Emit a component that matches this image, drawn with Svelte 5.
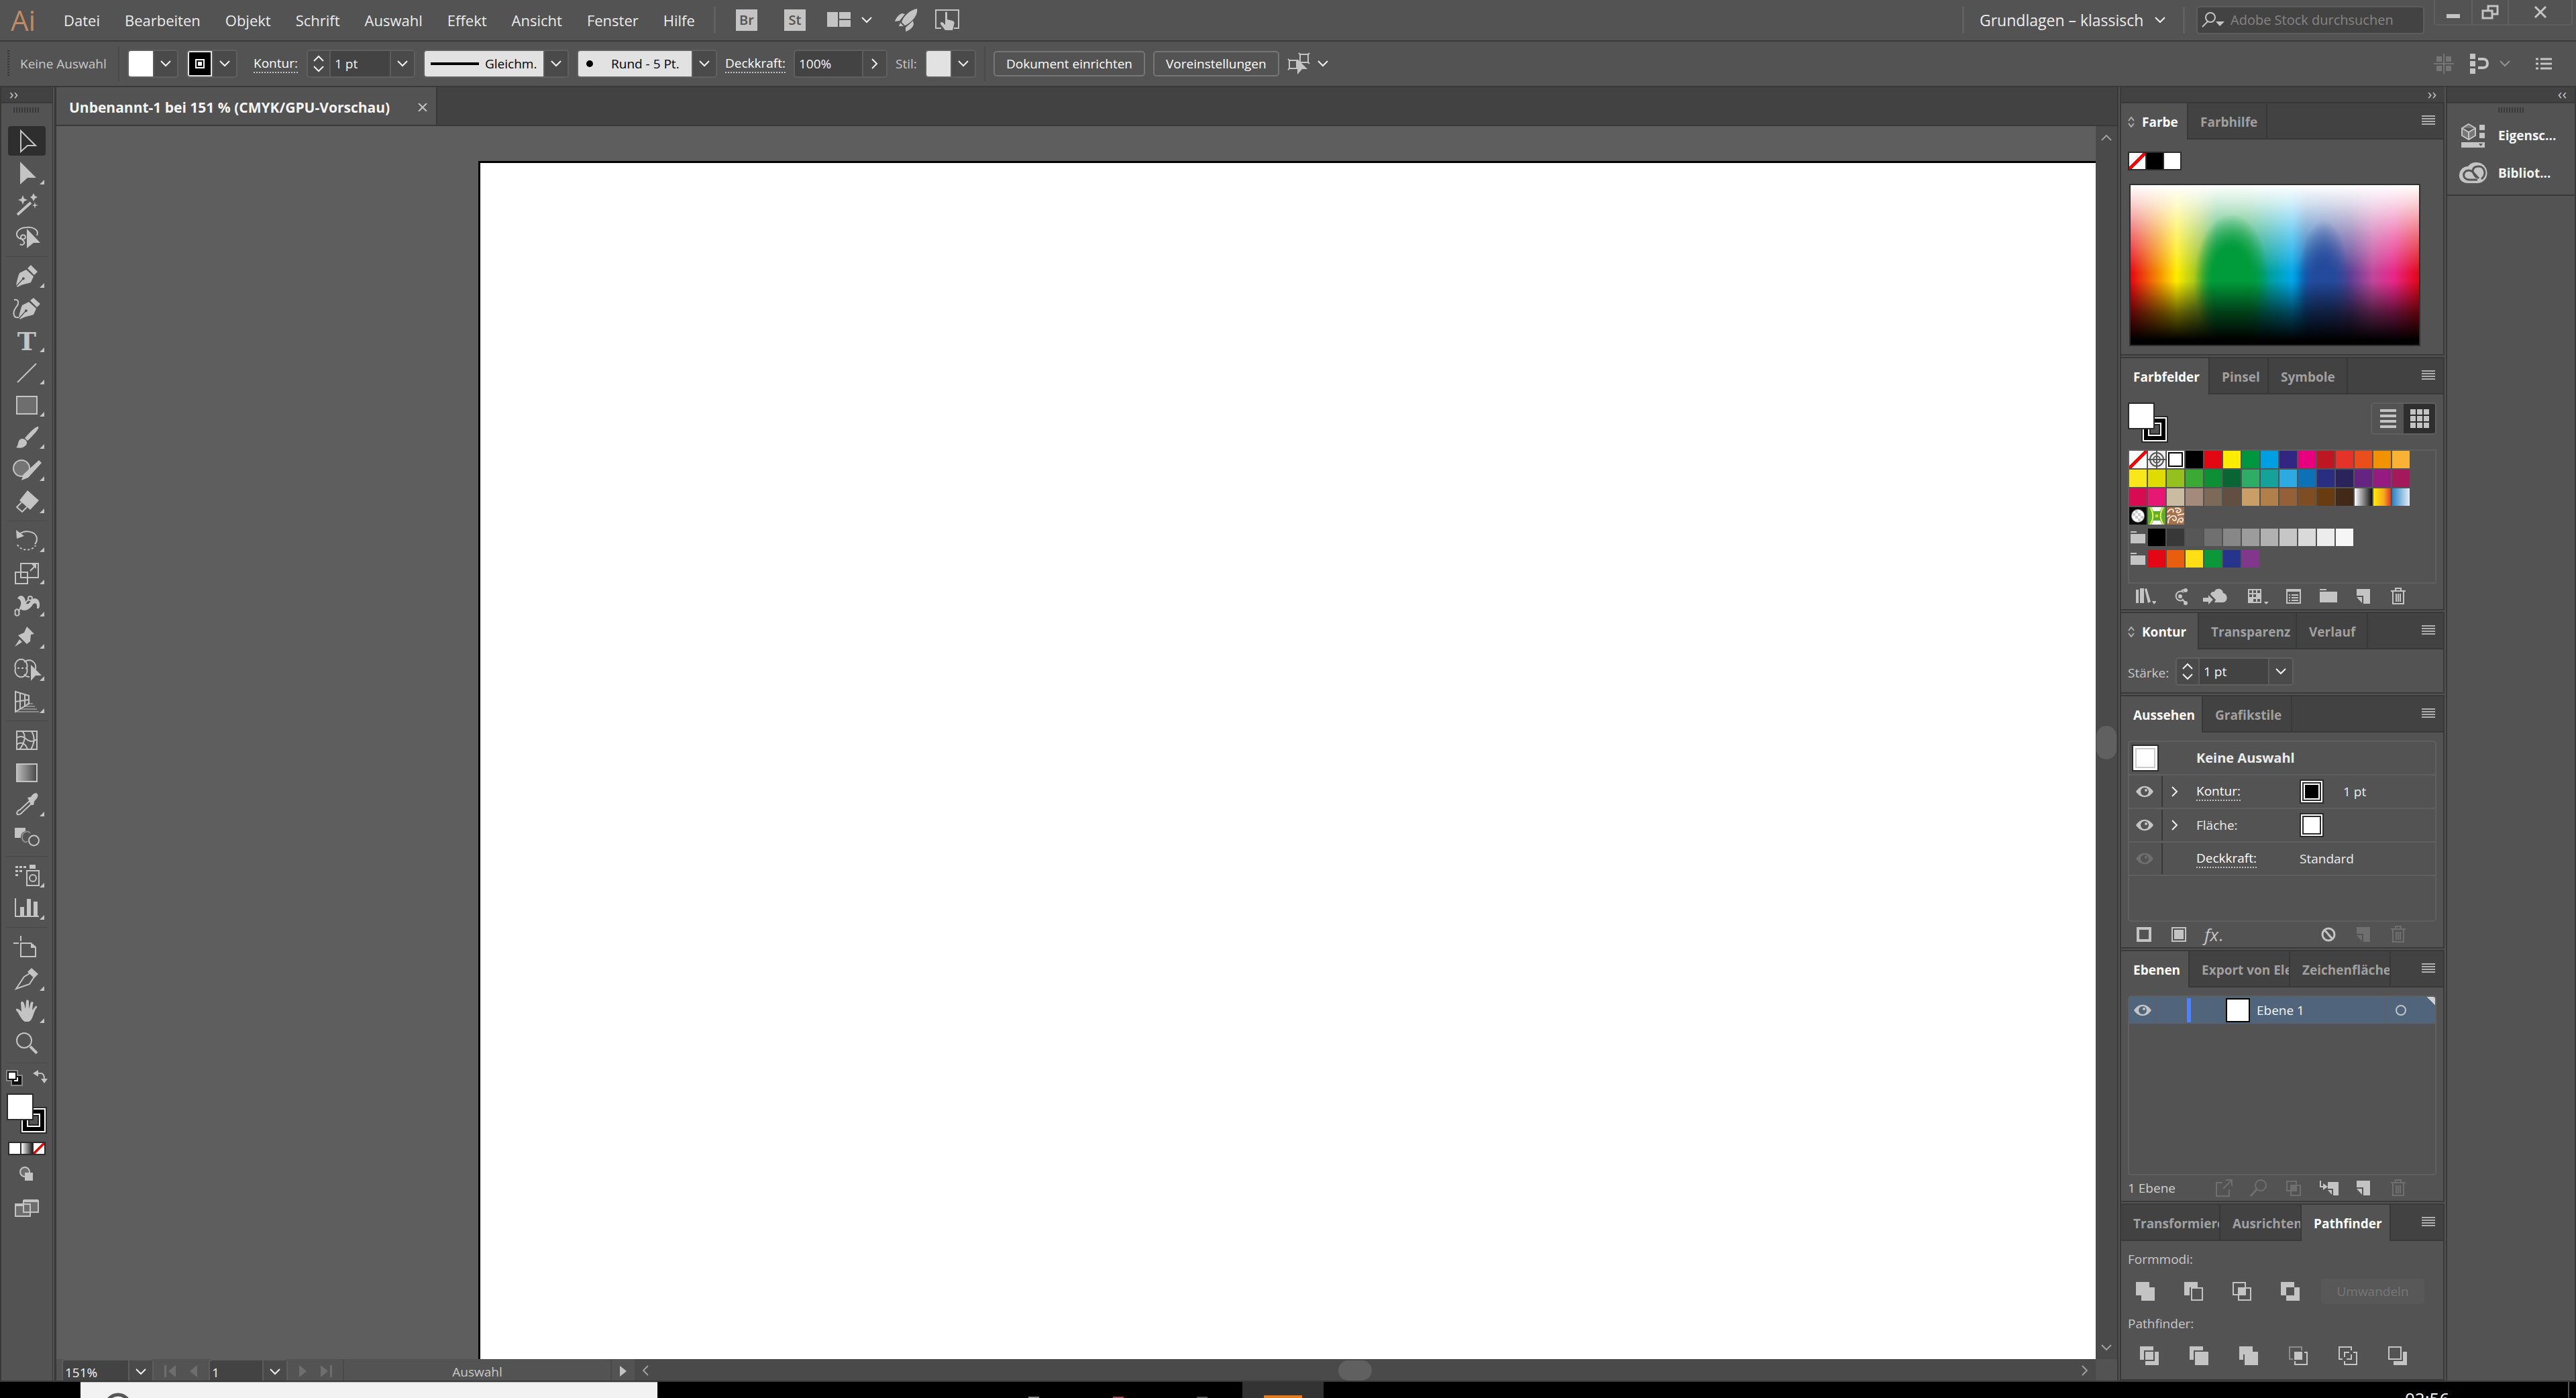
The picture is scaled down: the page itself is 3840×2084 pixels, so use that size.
<script>
  const menus = ['Datei', 'Bearbeiten', 'Objekt', 'Schrift', 'Auswahl', 'Effekt', 'Ansicht', 'Fenster', 'Hilfe'];

  // s = stroked path, f = filled path, dim = second stroked path in darker grey
  const arrow = 'M19 7L41 29H29L19 38Z';
  const toolGroups = [
    [
      { n: 'Auswahl', s: arrow, on: true },
      { n: 'Direktauswahl', f: 'M18 5L42 29H29L18 39Z', fly: true },
      { n: 'Zauberstab', thick: 'M14 36L34 18', f: 'M22 7L24 12L29 14L24 16L22 21L20 16L15 14L20 12ZM38 4L40 8L44 10L40 12L38 16L36 12L33 10L36 8ZM40 17L41 21L45 22L41 23L40 27L39 23L36 22L39 21Z' },
      { n: 'Lasso', s: 'M43 19C47 10 36 6 28 7C19 7 12 12 13 18C14 24 24 27 26 22C26 17 19 17 19 22C20 26 26 27 24 31C22 34 19 33 18 32', f: 'M28 9L48 30H38L28 38Z' }
    ],
    [
      { n: 'Zeichenstift', f: 'M34 5L44 15L39 20L29 10ZM27 12L38 22L34 31C28 33 20 34 14 38L13 37L22 27A2 2 0 1 0 21 26L12 36C13 28 15 22 17 17Z', fly: true },
      { n: 'Kurvenzeichner', s: 'M9 9C16 7 17 14 12 20C6 28 8 37 16 35', f: 'M38 6L48 15L43 20L33 10ZM31 12L42 22L38 31C32 33 24 34 18 38L17 37L26 27A2 2 0 1 0 25 26L16 36C17 28 19 22 21 17Z' },
      { n: 'Text', t: true, fly: true },
      { n: 'Liniensegment', s: 'M14 36L42 8', fly: true },
      { n: 'Rechteck', box: true, fly: true },
      { n: 'Pinsel', f: 'M45 6C48 8 36 21 29 27L25 23C31 16 41 5 45 6ZM12 37C16 34 14 28 18 25C22 22 29 26 28 31C26 37 19 39 12 37Z', fly: true },
      { n: 'Shaper', ell: true, f: 'M46 8L50 12L30 34L20 38L23 29Z', fly: true },
      { n: 'Radiergummi', f: 'M29 5L46 20L33 34L17 20Z', s: 'M20 23L13 30L21 37L28 30', fly: true }
    ],
    [
      { n: 'Drehen', s: 'M15 14C24 5 42 7 43 19C43 22 42 25 40 27', f: 'M12 6L13 19L24 15Z', dots: 'M14 28C19 38 36 38 41 29', fly: true },
      { n: 'Skalieren', s: 'M19 8H45V29H19ZM11 21H29V38H11ZM33 19L41 11', f: 'M35 9H42V16Z', fly: true },
      { n: 'Breite', f: 'M14 12C18 4 27 9 26 19C32 24 32 14 39 12C46 11 49 20 46 27H43C44 20 41 17 37 21C32 30 22 33 17 26C20 22 21 14 14 12Z', s: 'M15 31L31 13M11 33A3 3 0 1 0 16 33A3 3 0 1 0 11 33M30 12A3 3 0 1 0 36 12A3 3 0 1 0 30 12', fly: true },
      { n: 'Verschieben', f: 'M28 6L39 17L34 18L33 28L28 32L15 19L24 15ZM10 36L17 25L21 29Z', fly: true },
      { n: 'Formerstellung', s: 'M24 11C33 4 43 11 41 22M24 29C26 32 29 33 32 33M28 20A9 10 0 1 0 11 20A9 10 0 1 0 28 20', dots: 'M14 20H32', f: 'M34 15L50 31H41L34 39Z', fly: true },
      { n: 'Perspektivenraster', s: 'M11 7L31 13V25L11 37ZM18 9V33M25 11V29M11 22L31 19', dim: 'M28 25H37M24 29H40M19 33H43M11 37H46', fly: true }
    ],
    [
      { n: 'Gitter', s: 'M13 8H43V35H13ZM13 18C22 12 27 21 31 22C36 25 40 22 43 20M13 28C20 22 27 28 29 35M21 8C28 14 24 27 17 35M35 8C40 16 40 25 34 35' },
      { n: 'Verlauf', grad: true },
      { n: 'Pipette', s: 'M33 15L18 29C14 30 12 34 14 36C16 37 20 35 21 33L36 19', f: 'M29 11L34 10C37 4 43 3 44 6C46 10 41 14 39 17L38 22L34 22Z', fly: true },
      { n: 'Angleichen', f: 'M10 8H26V13C21 14 19 18 19 23H10Z', dim: 'M33 16C30 11 21 14 21 22C21 28 26 31 29 28', s: 'M46 27A7 7 0 1 0 31 27A7 7 0 1 0 46 27' }
    ],
    [
      { n: 'Symbol aufsprühen', s: 'M28 14H46V36H28ZM42 25A5 5 0 1 0 32 25A5 5 0 1 0 42 25', f: 'M32 5H41V11H32ZM11 7h4v3h-4ZM17 7h4v3h-4ZM23 7h4v3h-4ZM11 13h4v3h-4ZM17 13h4v3h-4ZM11 19h4v3h-4Z', fly: true },
      { n: 'Diagramm', s: 'M11 7V34H46', f: 'M18 20H24V35H18ZM28 8H34V35H28ZM38 12H44V35H38Z', fly: true }
    ],
    [
      { n: 'Zeichenfläche', s: 'M8 16H16M19 5V13M19 16H34L41 22V36H19Z', f: 'M34 16V23H42Z' },
      { n: 'Slice', s: 'M34 12L24 18L12 36L32 29L39 18', f: 'M35 5L45 14L39 20L29 11Z', fly: true },
      { n: 'Hand', f: 'M12 18C15 17 18 20 20 22L19 9C20 5 23 7 24 10L26 18L27 6C28 4 31 4 31 7V18L34 8C36 6 39 8 37 11L36 20L40 15C42 12 45 15 42 17C38 22 37 35 31 37H25C19 34 17 25 12 20Z', fly: true },
      { n: 'Zoom', s: 'M35 17A11 11 0 1 0 13 17A11 11 0 1 0 35 17', thick: 'M33 26L43 36' }
    ]
  ];

  const swatches = [
    ['no', 'reg', 'sel', '#000000', '#e30613', '#ffed00', '#009640', '#009fe3', '#312783', '#e6007e', '#be1622', '#e6332a', '#e94e1b', '#f39200', '#f9b233'],
    ['#f9e71c', '#dedc00', '#95c11f', '#3aaa35', '#0d9035', '#086634', '#2fac66', '#15a29a', '#2eaae2', '#0e71b8', '#2a2e83', '#2a235c', '#652482', '#951b81', '#a3195b'],
    ['#d60b51', '#e71873', '#cbbba0', '#a48a7b', '#7b6a58', '#634e42', '#ca9e67', '#b07f4a', '#936037', '#7d4e24', '#693b11', '#432918', 'g1', 'g2', 'g3'],
    ['pat1', 'pat2', 'pat3'],
    ['folder', '#000000', '#383838', '#575757', '#707070', '#878787', '#9c9c9c', '#b1b1b1', '#c6c6c6', '#dadada', '#ececec', '#f6f6f6'],
    ['folder', '#e30613', '#e95d0f', '#ffde16', '#0b983a', '#27348b', '#82368c']
  ];

  const modes = [
    { n: 'Vereinen', f: 'M0 0H20V8H28V28H8V20H0Z' },
    { n: 'Vorderes Objekt abziehen', f: 'M0 0H20V8H8V20H0Z', s: 'M11 9H27V27H11Z' },
    { n: 'Schnittmenge bilden', f: 'M8 8H20V20H8Z', s: 'M1 1H19V19H1ZM9 9H27V27H9Z' },
    { n: 'Schnittmenge entfernen', f: 'M0 0H20V8H8V20H0ZM20 8H28V28H8V20H20Z' }
  ];
  const finders = [
    { n: 'Fläche aufteilen', f: 'M0 0H20V6H6V20H0ZM8 8H20V20H8ZM22 8H28V28H8V22H22Z' },
    { n: 'Überlappungsbereich entfernen', f: 'M0 0H20V6H6V20H0ZM8 8H28V28H8Z' },
    { n: 'Verdeckte Fläche entfernen', f: 'M0 0H20V8H28V28H8V12H6V20H0Z' },
    { n: 'Schnittmengenfläche', f: 'M8 8H20V20H8Z', dim: 'M6 19H1V1H19V6', s: 'M23 9H27V27H9V22' },
    { n: 'Kontur aufteilen', s: 'M6 19H1V1H19V6M9 16V9H16M19 12V19H12M22 9H27V27H9V22' },
    { n: 'Hinteres Objekt abziehen', s: 'M1 1H19V19H1Z', f: 'M22 8H28V28H8V22H22Z' }
  ];
  const appearance = [
    { n: 'Kontur:', link: true, sw: 'dark', v: '1 pt' },
    { n: 'Fläche:', sw: 'light', v: '' }
  ];
</script>

{#snippet chev(dir)}
  <svg class="chev {dir}" viewBox="0 0 16 10" aria-hidden="true"><path d="M1 1L8 8L15 1" /></svg>
{/snippet}

{#snippet tabs(list, arrows)}
  <div class="tabs" role="tablist">
    {#each list as t}
      <button type="button" class="tab" class:on={t.on} role="tab" aria-selected={!!t.on} style:width="{t.w}px">
        {#if arrows && t.on}
          <svg class="updown" viewBox="0 0 10 16" aria-hidden="true"><path d="M1 6L5 1L9 6M1 10L5 15L9 10" /></svg>
        {/if}
        {t.n}
      </button>
    {/each}
    <button type="button" class="burger" aria-label="Bedienfeldmenü"><i></i><i></i><i></i><i></i></button>
  </div>
{/snippet}

{#snippet eye(off)}
  <svg class="eye" class:off viewBox="0 0 26 18" aria-hidden="true">
    <path d="M0 9C7 -2 19 -2 26 9C19 20 7 20 0 9Z" /><circle cx="13" cy="9" r="6" class="iris" /><circle cx="15" cy="7" r="2" />
  </svg>
{/snippet}

{#snippet newIcon(off)}
  <button type="button" class="ib" class:off aria-label="Neu">
    <svg viewBox="0 0 30 26"><path class="f" d="M5 2H25V24H15V12H5ZM5 14H13V23Z" /></svg>
  </button>
{/snippet}

{#snippet trash(off)}
  <button type="button" class="ib" class:off aria-label="Löschen">
    <svg viewBox="0 0 30 26"><path class="s" d="M4 5H26M11 4V1H19V4M7 6V24H23V6M12 9V21M15 9V21M18 9V21" /></svg>
  </button>
{/snippet}

{#snippet fillStroke()}
  <span class="fs"><i class="st"><i></i></i><i class="fi"></i></span>
{/snippet}

<div class="app">
  <header class="top">
    <span class="logo">Ai</span>
    <nav class="menu">
      {#each menus as m}<button type="button">{m}</button>{/each}
    </nav>
    <i class="vbar"></i>
    <div class="apps">
      <button type="button" class="sq">Br</button>
      <button type="button" class="sq">St</button>
      <button type="button" class="arr" aria-label="Dokumente anordnen">
        <svg width="36" height="24" viewBox="0 0 36 24"><path class="f" d="M0 0H16V22H0ZM18 0H35V10H18ZM18 12H35V22H18Z" /></svg>
        {@render chev('down')}
      </button>
      <button type="button" aria-label="GPU-Leistung">
        <svg width="36" height="36" viewBox="0 0 36 36"><path class="f" d="M35 1C37 11 26 22 17 26L12 21C15 12 24 3 35 1ZM13 8L17 9L9 19L2 20C4 14 8 9 13 8ZM29 19L30 24C29 29 24 33 18 35V29ZM10 22L15 27L8 27Z" /></svg>
      </button>
      <button type="button" aria-label="Touch-Arbeitsbereich">
        <svg width="36" height="32" viewBox="0 0 36 32"><path class="s" d="M9 28H1V1H35V28H28" /><path class="f" d="M15 5C15 3 18 3 18 5V15L26 17C29 18 29 20 28 23L26 31H15L8 22C7 19 10 18 12 20L15 23Z" /></svg>
      </button>
    </div>
    <div class="topright">
      <i class="vbar"></i>
      <label class="space">
        <select aria-label="Arbeitsbereich"><option>Grundlagen – klassisch</option></select>
        {@render chev('down')}
      </label>
      <i class="vbar"></i>
      <label class="search">
        <svg width="34" height="24" viewBox="0 0 34 24"><circle cx="13" cy="8" r="7" class="s" /><path class="s" d="M9 14L1 22" /><path class="f" d="M21 14H34L27 21Z" /></svg>
        <input type="search" placeholder="Adobe Stock durchsuchen" aria-label="Adobe Stock durchsuchen" />
      </label>
      <div class="win">
        <button type="button" aria-label="Minimieren"><svg width="22" height="20" viewBox="0 0 22 20"><path class="f" d="M1 13H21V19H1Z" /></svg></button>
        <button type="button" aria-label="Wiederherstellen"><svg width="26" height="22" viewBox="0 0 26 22"><path class="s w3" d="M10 8V2H24V14H17M2 9H16V20H2Z" /></svg></button>
        <button type="button" class="x" aria-label="Schließen"><svg width="20" height="18" viewBox="0 0 20 18"><path class="s w3" d="M2 1L18 17M18 1L2 17" /></svg></button>
      </div>
    </div>
  </header>

  <div class="control">
    <i class="grip v"></i>
    <span class="dim selinfo">Keine Auswahl</span>
    <i class="sep"></i>
    <div class="field sw"><button type="button" class="chip white" aria-label="Fläche"></button><button type="button" class="dd" aria-label="Flächenfarbe wählen">{@render chev('down')}</button></div>
    <div class="field sw"><button type="button" class="chip blk" aria-label="Kontur"><i></i></button><button type="button" class="dd" aria-label="Konturfarbe wählen">{@render chev('down')}</button></div>
    <label class="ul kon" for="weight"><span>Kontur:</span></label>
    <div class="field wt">
      <span class="step"><button type="button" aria-label="Mehr">{@render chev('up')}</button><button type="button" aria-label="Weniger">{@render chev('down')}</button></span>
      <input id="weight" value="1 pt" />
      <button type="button" class="dd" aria-label="Konturstärke wählen">{@render chev('down')}</button>
    </div>
    <label class="field lite prof">
      <span class="face"><svg width="72" height="4" viewBox="0 0 72 4"><path d="M0 0H72V4H0Z" /></svg><select aria-label="Breitenprofil"><option>Gleichm.</option></select></span>
      <span class="dd">{@render chev('down')}</span>
    </label>
    <label class="field lite rund">
      <span class="face"><svg width="10" height="10" viewBox="0 0 10 10"><circle cx="5" cy="5" r="5" /></svg><select aria-label="Pinseldefinition"><option>Rund - 5 Pt.</option></select></span>
      <span class="dd">{@render chev('down')}</span>
    </label>
    <label class="ul deck" for="opacity"><span>Deckkraft:</span></label>
    <div class="field op"><input id="opacity" value="100%" /><button type="button" class="dd" aria-label="Deckkraft wählen">{@render chev('right')}</button></div>
    <span class="dim stil">Stil:</span>
    <div class="field sw"><button type="button" class="chip grey" aria-label="Grafikstil"></button><button type="button" class="dd" aria-label="Grafikstil wählen">{@render chev('down')}</button></div>
    <i class="sep"></i>
    <button type="button" class="btn">Dokument einrichten</button>
    <button type="button" class="btn">Voreinstellungen</button>
    <button type="button" class="match" aria-label="Ähnliche Objekte auswählen">
      <svg width="34" height="34" viewBox="0 0 34 34"><path class="s" d="M19 3H31V15H19ZM3 12H14V24H3ZM17 1L19 3M31 3L33 1M31 15L33 17M1 10L3 12M3 24L1 26" /><path class="f" d="M15 10L30 25H22L15 33Z" /></svg>
      {@render chev('down')}
    </button>
    <div class="ctlright">
      <svg class="faint" width="30" height="30" viewBox="0 0 30 30"><path class="f" d="M4 4H12V12H4ZM18 4H26V12H18ZM4 18H12V26H4ZM18 18H26V26H18Z" /><path class="s" d="M15 0V30M0 15H30" /></svg>
      <span class="magnet">
        <svg width="30" height="30" viewBox="0 0 30 30"><path class="f" d="M0 0H8V8H0ZM0 11H8V19H0ZM0 22H8V30H0Z" /><path class="s w4" d="M12 8H20C28 8 28 21 20 21H12" /></svg>
        {@render chev('down')}
      </span>
      <svg width="24" height="18" viewBox="0 0 24 18"><path class="s w3" d="M0 2H4M7 2H24M0 9H4M7 9H24M0 16H4M7 16H24" /></svg>
    </div>
  </div>

  <main class="main">
    <aside class="tools">
      <div class="strip left">››</div>
      <i class="grip h"></i>
      {#each toolGroups as g}
        <div class="group">
          {#each g as t}
            <button type="button" class="tool" class:on={t.on} aria-label={t.n}>
              <svg viewBox="0 0 56 44">
                {#if t.dim}<path class="s g" d={t.dim} />{/if}
                {#if t.box}<rect x="13" y="9" width="30" height="26" fill="#6e6e6e" class="b" />{/if}
                {#if t.grad}
                  <defs><linearGradient id="tg"><stop offset="0" stop-color="#bbb" /><stop offset="1" stop-color="#484848" /></linearGradient></defs>
                  <rect x="13" y="9" width="30" height="26" fill="url(#tg)" class="b" />
                {/if}
                {#if t.ell}<circle cx="20" cy="20" r="12" fill="#757575" class="b" />{/if}
                {#if t.s}<path class="s" d={t.s} />{/if}
                {#if t.thick}<path class="s w4" d={t.thick} />{/if}
                {#if t.dots}<path class="s dots" d={t.dots} />{/if}
                {#if t.f}<path class="f" d={t.f} />{/if}
                {#if t.t}<text x="28" y="36" text-anchor="middle">T</text>{/if}
                {#if t.fly}<path class="f" d="M47 39H54V32Z" />{/if}
              </svg>
            </button>
          {/each}
        </div>
      {/each}
      <div class="mini">
        <svg width="26" height="26" viewBox="0 0 26 26"><path fill="#888" d="M0 1H18V8H25V25H7V18H0Z" /><path fill="#111" d="M2 3H16V10H23V23H9V16H2Z" /><path fill="#fff" d="M4 5H14V14H4ZM16 12H18V18H12V16H16Z" /></svg>
        <svg width="22" height="22" viewBox="0 0 22 22"><path class="s" d="M5 6H12C16 6 17 9 17 15" /><path class="f" d="M0 6L8 1V11ZM12 14H22L17 21Z" /></svg>
      </div>
      {@render fillStroke()}
      <div class="trio"><i class="w"></i><i class="gr"></i><i class="no"></i></div>
      <svg class="mode" width="22" height="22" viewBox="0 0 22 22"><circle cx="8" cy="8" r="7" fill="#6e6e6e" class="b" /><path class="f" d="M8 9H20V21H8Z" /></svg>
      <svg class="mode" width="36" height="26" viewBox="0 0 36 26"><path fill="#6e6e6e" class="b" d="M1 7H23V25H1ZM13 2H35V19H13Z" /><path class="s w4" d="M1 8H12M13 2H35" /></svg>
    </aside>

    <section class="doc">
      <div class="doctabs">
        <div class="doctab"><span>Unbenannt-1 bei 151 % (CMYK/GPU-Vorschau)</span>
          <button type="button" aria-label="Dokument schließen"><svg width="14" height="12" viewBox="0 0 14 12"><path class="s" d="M1 0L13 12M13 0L1 12" /></svg></button></div>
      </div>
      <div class="view">
        <div class="canvas"><div class="artboard"></div></div>
        <div class="vscroll">{@render chev('up')}<i class="thumb"></i>{@render chev('down')}</div>
      </div>
      <footer class="status">
        <div class="sf z"><input aria-label="Zoomstufe" value="151%" /><button type="button" aria-label="Zoomstufe wählen">{@render chev('down')}</button></div>
        <div class="nav">
          <svg width="18" height="18" viewBox="0 0 18 18"><path d="M0 0H3V18H0ZM17 0V18L6 9Z" /></svg>
          <svg width="12" height="18" viewBox="0 0 12 18"><path d="M11 0V18L0 9Z" /></svg>
        </div>
        <div class="sf a"><input aria-label="Zeichenfläche" value="1" /><button type="button" aria-label="Zeichenfläche wählen">{@render chev('down')}</button></div>
        <div class="nav">
          <svg width="12" height="18" viewBox="0 0 12 18"><path d="M1 0V18L12 9Z" /></svg>
          <svg width="18" height="18" viewBox="0 0 18 18"><path d="M15 0H18V18H15ZM1 0V18L12 9Z" /></svg>
        </div>
        <span class="cur">Auswahl</span>
        <button type="button" class="play" aria-label="Statusanzeige"><svg width="10" height="16" viewBox="0 0 10 16"><path class="f" d="M0 0L10 8L0 16Z" /></svg></button>
        <div class="hscroll">{@render chev('left')}<i class="thumb"></i>{@render chev('right')}</div>
        <i class="corner"></i>
      </footer>
    </section>

    <aside class="panels">
      <div class="strip right">››</div>

      <section class="panel farbe">
        {@render tabs([{ n: 'Farbe', w: 100, on: true }, { n: 'Farbhilfe', w: 118 }], true)}
        <div class="body">
          <div class="trio"><i class="no"></i><i class="k"></i><i class="w"></i></div>
          <div class="spectrum"></div>
        </div>
      </section>

      <section class="panel felder">
        {@render tabs([{ n: 'Farbfelder', w: 132, on: true }, { n: 'Pinsel', w: 88 }, { n: 'Symbole', w: 118 }], false)}
        <div class="body">
          <div class="fhead">
            {@render fillStroke()}
            <div class="toggle">
              <button type="button" aria-label="Liste"><svg width="24" height="28" viewBox="0 0 24 28"><path class="s w4" d="M0 2H24M0 10H24M0 18H24M0 26H24" /></svg></button>
              <button type="button" class="on" aria-label="Miniaturen"><svg width="28" height="28" viewBox="0 0 28 28"><path class="f" d="M0 0h8v8h-8zM10 0h8v8h-8zM20 0h8v8h-8zM0 10h8v8h-8zM10 10h8v8h-8zM20 10h8v8h-8zM0 20h8v8h-8zM10 20h8v8h-8zM20 20h8v8h-8z" /></svg></button>
            </div>
          </div>
          <div class="swbox">
            {#each swatches as row}
              <div class="swrow" class:fold={row[0] === 'folder'}>
                {#each row as c}
                  {#if c[0] === '#'}
                    <i style:background={c}></i>
                  {:else if c === 'folder'}
                    <svg viewBox="0 0 26 26"><path class="f" d="M2 4H11V6H2ZM2 8H24V22H2Z" /></svg>
                  {:else if c === 'reg'}
                    <svg viewBox="0 0 26 26"><path fill="#eee" d="M0 0H26V26H0Z" /><path stroke="#555" stroke-width="2" fill="none" d="M13 0V26M0 13H26M23 13A10 10 0 1 0 3 13A10 10 0 1 0 23 13M18 13A5 5 0 1 0 8 13A5 5 0 1 0 18 13" /></svg>
                  {:else if c === 'pat1'}
                    <svg viewBox="0 0 26 26"><path d="M0 0H26V26H0Z" fill="#0a0a0a" /><circle cx="13" cy="13" r="10" fill="#999" /><circle cx="13" cy="13" r="9" fill="#fff" /><path fill="#ccc" d="M9 5h4v4h-4zM5 9h4v4h-4zM13 9h4v4h-4zM9 13h4v4h-4zM17 13h4v4h-4zM13 17h4v4h-4z" /></svg>
                  {:else if c === 'pat2'}
                    <svg viewBox="0 0 26 26"><path d="M0 0H26V26H0Z" fill="#5cb02c" /><path fill="#fff" d="M5 0H21L18 6H8ZM5 26H21L18 20H8Z" /><path fill="none" stroke="#f3ec6a" stroke-width="2" d="M3 0C9 9 9 17 3 26M23 0C17 9 17 17 23 26" /><path fill="#d9dc2e" d="M11 11h4v4h-4z" /></svg>
                  {:else if c === 'pat3'}
                    <svg viewBox="0 0 26 26"><path d="M0 0H26V26H0Z" fill="#a5714a" /><path fill="none" stroke="#f1e2cf" stroke-width="2" d="M1 8C6 0 12 3 9 8M12 2C20 0 24 6 18 8C14 9 13 5 17 5M2 24C2 12 14 10 14 17C14 22 8 20 9 17M16 24C17 15 25 14 24 20C22 24 19 22 20 20M16 12L26 10M0 14L5 12" /></svg>
                  {:else}
                    <i class={c}></i>
                  {/if}
                {/each}
              </div>
            {/each}
          </div>
          <div class="foot">
            <button type="button" class="ib l1" aria-label="Bibliotheken"><svg viewBox="0 0 30 26"><path class="f" d="M0 3H4V23H0ZM6 1H12V23H6ZM13 2L16 1L22 21L18 23ZM24 20H31L27 25Z" /></svg></button>
            <button type="button" class="ib l2" aria-label="Farbthemen"><svg viewBox="0 0 30 26"><path class="s" d="M19 7A7 7 0 1 0 19 18M16 4L22 3M17 17L22 23" /><circle class="f" cx="14" cy="13" r="3" /><circle class="f" cx="22" cy="4" r="3" /><circle class="f" cx="22" cy="23" r="3" /></svg></button>
            <button type="button" class="ib l3" aria-label="Zur Bibliothek hinzufügen"><svg viewBox="0 0 36 26"><path class="f" d="M0 15H8V11L15 18L8 25V21H0ZM17 22L19 18L11 10C12 6 15 6 17 6C19 0 29 0 30 8C37 9 38 21 30 22Z" /></svg></button>
            <button type="button" class="ib l4" aria-label="Farbfeldtypen"><svg viewBox="0 0 32 26"><path class="f" d="M1 2H21V23H1ZM25 21H32L28 25Z" /><path fill="#555" d="M3 4h4v4h-4zM9 4h4v4h-4zM15 4h4v4h-4zM3 10h4v4h-4zM9 10h4v4h-4zM9 17h4v4h-4zM15 17h4v4h-4z" /></svg></button>
            <button type="button" class="ib l5" aria-label="Farbfeldoptionen"><svg viewBox="0 0 30 26"><path class="s" d="M5 3H25V23H5ZM5 5H25M8 11H10M12 11H22M8 15H10M12 15H22M8 19H10M12 19H22" /></svg></button>
            <button type="button" class="ib l6" aria-label="Neue Farbgruppe"><svg viewBox="0 0 30 26"><path class="f" d="M2 2H12V4H2ZM2 6H28V22H2Z" /></svg></button>
            {@render newIcon(false)}
            {@render trash(false)}
          </div>
        </div>
      </section>

      <section class="panel kontur">
        {@render tabs([{ n: 'Kontur', w: 116, on: true }, { n: 'Transparenz', w: 146 }, { n: 'Verlauf', w: 106 }], true)}
        <div class="body">
          <label class="dim" for="strength">Stärke:</label>
          <div class="field stk">
            <span class="step"><button type="button" aria-label="Mehr">{@render chev('up')}</button><button type="button" aria-label="Weniger">{@render chev('down')}</button></span>
            <input id="strength" value="1 pt" />
            <button type="button" class="dd" aria-label="Stärke wählen">{@render chev('down')}</button>
          </div>
        </div>
      </section>

      <section class="panel aussehen">
        {@render tabs([{ n: 'Aussehen', w: 122, on: true }, { n: 'Grafikstile', w: 133 }], false)}
        <div class="body">
          <div class="list">
            <div class="arow head"><i class="thumbn"></i><b>Keine Auswahl</b></div>
            {#each appearance as a}
              <div class="arow">
                <span class="ec">{@render eye(false)}</span>
                <span class="cc">{@render chev('right')}</span>
                <span class="an" class:ul={a.link}><span>{a.n}</span></span>
                <i class="asw {a.sw}"><i></i></i>
                <span>{a.v}</span>
              </div>
            {/each}
            <div class="arow">
              <span class="ec">{@render eye(true)}</span><span class="cc"></span>
              <span class="an ul"><span>Deckkraft:</span></span><span>Standard</span>
            </div>
          </div>
          <div class="foot">
            <button type="button" class="ib" aria-label="Neue Kontur"><svg viewBox="0 0 30 26"><path class="s w4" d="M6 4H24V22H6Z" /></svg></button>
            <button type="button" class="ib a2" aria-label="Neue Fläche"><svg viewBox="0 0 30 26"><path class="s" d="M5 3H25V23H5Z" /><path class="f" d="M8 6H22V20H8Z" /></svg></button>
            <button type="button" class="ib fx" aria-label="Effekt hinzufügen"><em>fx</em>.</button>
            <button type="button" class="ib a4" aria-label="Aussehen löschen"><svg viewBox="0 0 30 26"><circle class="s w3" cx="15" cy="13" r="9" /><path class="s w3" d="M9 6L21 20" /></svg></button>
            {@render newIcon(true)}
            {@render trash(true)}
          </div>
        </div>
      </section>

      <section class="panel ebenen">
        {@render tabs([{ n: 'Ebenen', w: 102, on: true }, { n: 'Export von Ele', w: 150 }, { n: 'Zeichenfläche', w: 150 }], false)}
        <div class="body">
          <div class="list">
            <div class="layer">
              <span class="le">{@render eye(false)}</span><span class="ll"></span><i class="bar"></i>
              <i class="lt"></i><span class="ln">Ebene 1</span>
              <span class="lo"><i></i></span>
            </div>
          </div>
          <div class="foot">
            <span class="count">1 Ebene</span>
            <button type="button" class="ib off" aria-label="Exportieren"><svg viewBox="0 0 30 26"><path class="s" d="M13 5H4V25H23V15M14 14L26 2M18 1H27V10" /></svg></button>
            <button type="button" class="ib off b2" aria-label="Objekt suchen"><svg viewBox="0 0 30 26"><circle class="s" cx="18" cy="9" r="8" /><path class="s w3" d="M12 15L3 25" /></svg></button>
            <button type="button" class="ib off b3" aria-label="Schnittmaske"><svg viewBox="0 0 30 26"><path class="s" d="M5 3H19V17H5ZM11 9H25V24H11Z" /><path class="f" d="M10 8H20V18H10Z" /></svg></button>
            <button type="button" class="ib b4" aria-label="Neue Unterebene"><svg viewBox="0 0 30 26"><path class="s" d="M3 2V11H8" /><path class="f" d="M7 6L14 11L7 16ZM14 4H30V24H22V14H14ZM14 16H20V23Z" /></svg></button>
            {@render newIcon(false)}
            {@render trash(true)}
          </div>
        </div>
      </section>

      <section class="panel path">
        {@render tabs([{ n: 'Transformiere', w: 148 }, { n: 'Ausrichten', w: 121 }, { n: 'Pathfinder', w: 133, on: true }], false)}
        <div class="body">
          <span class="dim">Formmodi:</span>
          <div class="prow modes">
            {#each modes as m}
              <button type="button" aria-label={m.n}><svg width="28" height="28" viewBox="0 0 28 28">{#if m.s}<path class="s" d={m.s} />{/if}<path class="f" d={m.f} /></svg></button>
            {/each}
            <button type="button" class="conv" disabled>Umwandeln</button>
          </div>
          <span class="dim">Pathfinder:</span>
          <div class="prow finders">
            {#each finders as m}
              <button type="button" aria-label={m.n}><svg width="28" height="28" viewBox="0 0 28 28">{#if m.dim}<path class="s g" d={m.dim} />{/if}{#if m.s}<path class="s" d={m.s} />{/if}{#if m.f}<path class="f" d={m.f} />{/if}</svg></button>
            {/each}
          </div>
        </div>
      </section>
    </aside>

    <aside class="dock">
      <div class="strip right">‹‹</div>
      <div class="dockbody">
        <i class="grip h"></i>
        <button type="button"><svg width="44" height="38" viewBox="0 0 44 38"><path fill="#777" class="b" d="M15 2L25 8V19L15 25L5 19V8ZM5 8L15 14L25 8M15 14V25" /><path class="f" d="M31 3H39V11H31ZM31 15H39V23H31ZM4 29H39V37H4Z" /><path fill="#555" d="M30 31H36L33 35Z" /></svg>Eigensc...</button>
        <button type="button"><svg width="44" height="38" viewBox="0 0 44 38"><path class="f" d="M14 9C20 0 36 1 41 12C46 24 38 34 28 34H14C4 34 0 27 1 21C2 14 7 9 14 9Z" /><path fill="none" stroke="#555" stroke-width="3" d="M34 28C43 20 38 9 30 9C20 9 18 17 27 26M28 29H16C4 28 6 15 15 15C21 15 23 20 30 27" /></svg>Bibliot...</button>
      </div>
    </aside>
  </main>

  <div class="taskbar">
    <div class="find"><svg width="44" height="24" viewBox="0 0 44 24"><circle cx="22" cy="36" r="18" fill="none" stroke="#555" stroke-width="5" /></svg></div>
    <div class="pins"><i class="p1"></i><i class="p2"></i><i class="p3"></i></div>
    <div class="active"><i></i></div>
    <time>02:56</time>
  </div>
</div>

<style>
  :global(body) { margin: 0; background: #000; }
  * { box-sizing: border-box; }
  .app { height: 100vh; display: flex; flex-direction: column; overflow: hidden; background: #535353; color: #f4f4f4; font-family: 'Open Sans', 'Noto Sans', sans-serif; font-size: 19px; line-height: 26px; }
  i { display: block; font-style: normal; flex: none; }
  svg { display: block; flex: none; }
  button, input, select { font: inherit; color: inherit; background: none; border: 0; margin: 0; padding: 0; border-radius: 0; outline: none; }
  button { display: flex; align-items: center; justify-content: center; white-space: nowrap; flex: none; }
  select { appearance: none; }
  input { min-width: 0; }
  .f { fill: #c4c4c4; }
  .s { fill: none; stroke: #c4c4c4; stroke-width: 2; }
  .b { stroke: #c4c4c4; stroke-width: 2; }
  .w3 { stroke-width: 3; }
  .w4 { stroke-width: 4; }
  .g { stroke: #8c8c8c; }
  .dots { stroke-dasharray: 3 3; }
  .dim { color: #c8c8c8; }
  .chev { width: 16px; height: 10px; fill: none; stroke: #f0f0f0; stroke-width: 2; }
  .chev.up { transform: rotate(180deg); }
  .chev.right { transform: rotate(-90deg); }
  .chev.left { transform: rotate(90deg); }

  .top { height: 62px; flex: none; display: flex; align-items: center; border-bottom: 2px solid #383838; font-size: 22px; line-height: 30px; color: #ececec; }
  .logo { width: 77px; padding-left: 16px; font-size: 42px; line-height: 44px; color: #c08a63; flex: none; }
  .menu { display: flex; padding-left: 18px; gap: 37px; width: 987px; flex: none; }
  .vbar { width: 3px; height: 40px; background: #606060; }
  .apps { display: flex; align-items: center; padding-left: 30px; }
  .sq { width: 32px; height: 32px; margin-right: 40px; background: #c4c4c4; color: #535353; font-size: 20px; font-weight: 600; }
  .sq + .arr { margin-left: -8px; }
  .arr { gap: 15px; margin-right: 32px; }
  .apps button:nth-child(4) { margin-right: 26px; }
  .topright { margin-left: auto; display: flex; align-items: center; align-self: stretch; }
  .space { display: flex; align-items: center; gap: 17px; padding: 0 26px 0 23px; font-size: 23px; }
  .space select { width: 244px; }
  .search { width: 340px; height: 42px; margin: 0 14px 0 17px; border: 2px solid #5e5e5e; border-radius: 5px; background: #434343; display: flex; align-items: center; gap: 9px; padding-left: 6px; }
  .search input { flex: 1; font-size: 20px; }
  .search input::placeholder { color: #858585; opacity: 1; }
  .win { align-self: flex-start; height: 38px; margin-right: 5px; display: flex; border: 2px solid #606060; border-top: 0; border-radius: 0 0 5px 5px; }
  .win button { width: 54px; }
  .win button + button { border-left: 2px solid #606060; }
  .win .x { width: 95px; }

  .control { height: 68px; flex: none; display: flex; align-items: center; gap: 12px; padding-left: 11px; border-bottom: 2px solid #383838; }
  .control > * { flex: none; white-space: nowrap; }
  .grip.v { width: 3px; height: 40px; background: repeating-linear-gradient(#383838 0 2px, #535353 2px 4px); }
  .grip.h { width: 40px; height: 8px; background: repeating-linear-gradient(90deg, #383838 0 2px, #535353 2px 4px); }
  .selinfo { width: 138px; padding-left: 4px; }
  .sep { width: 2px; height: 52px; background: #4a4a4a; }
  .field { height: 42px; display: flex; background: #434343; border: 2px solid #606060; border-radius: 5px; overflow: hidden; }
  .field input { flex: 1; padding-left: 6px; }
  .dd { width: 36px; flex: none; display: flex; align-items: center; justify-content: center; border-left: 2px solid #5c5c5c; background: #4a4a4a; }
  .sw { width: 76px; }
  .chip { flex: 1; background: #fff; }
  .chip.grey { background: #e2e2e2; }
  .chip.blk { background: #000; border: 2px solid #e2e2e2; }
  .chip.blk i { width: 14px; height: 14px; border: 2px solid #fff; padding: 2px; background: #fff content-box; }
  .ul span { display: inline-block; line-height: 26px; border-bottom: 2px dotted #c4c4c4; color: #fff; }
  .kon { width: 79px; padding-left: 12px; }
  .deck { width: 90px; }
  .stil { width: 32px; }
  .wt { width: 162px; }
  .step { width: 34px; display: flex; flex-direction: column; align-items: center; justify-content: space-evenly; border-right: 2px solid #5c5c5c; background: #4a4a4a; }
  .face { flex: 1; display: flex; align-items: center; justify-content: space-between; background: #e2e2e2; color: #000; padding: 0 9px; }
  .prof { width: 217px; }
  .rund { width: 209px; }
  .rund .face { padding: 0 18px 0 12px; }
  .op { width: 140px; }
  .btn { height: 38px; padding: 0 17px; border: 2px solid #767676; border-radius: 5px; color: #fff; }
  .match { gap: 11px; }
  .ctlright { margin-left: auto; display: flex; align-items: center; gap: 24px; padding-right: 36px; }
  .faint { opacity: 0.3; }
  .magnet { display: flex; align-items: center; gap: 14px; margin-right: 14px; }
  .magnet .chev { opacity: 0.4; }

  .main { flex: 1; min-height: 0; display: flex; border-bottom: 2px solid #383838; }
  .strip { height: 24px; flex: none; align-self: stretch; background: #424242; border-bottom: 2px solid #383838; line-height: 18px; font-size: 22px; color: #c4c4c4; padding: 0 12px; }
  .strip.right { text-align: right; }

  .tools { width: 82px; flex: none; display: flex; flex-direction: column; align-items: center; border-left: 2px solid #383838; border-right: 4px double #383838; }
  .tools .grip { margin: 6px 0 18px; }
  .group { padding-bottom: 4px; margin-bottom: 5px; border-bottom: 1px solid #484848; width: 62px; display: flex; flex-direction: column; align-items: center; }
  .tool { width: 56px; height: 44px; margin: 2px 0; border-radius: 4px; }
  .tool.on { background: #2e2e2e; }
  .tool svg { width: 56px; height: 44px; }
  .tool text { fill: #c4c4c4; font: bold 38px 'DejaVu Serif', serif; }
  .mini { width: 62px; display: flex; justify-content: space-between; margin: 4px 0 10px; }
  .fs { display: grid; width: 60px; height: 60px; grid-template-columns: 1fr 1fr 1fr; grid-template-rows: 1fr 1fr 1fr; flex: none; }
  .fs .fi { grid-area: 1 / 1 / 3 / 3; background: #fff; border: 2px solid #2b2b2b; }
  .fs .st { grid-area: 2 / 2 / 4 / 4; background: #000; border: 2px solid #2b2b2b; box-shadow: inset 0 0 0 2px #fff; padding: 8px; }
  .fs .st i { height: 100%; border: 2px solid #fff; background: #535353; box-shadow: inset 0 0 0 2px #222; }
  .trio { display: flex; gap: 2px; padding: 2px; background: #2b2b2b; flex: none; }
  .trio i { width: 16px; height: 16px; background: #fff; }
  .tools .trio { margin: 12px 0 17px; }
  .trio .gr { background: linear-gradient(90deg, #fff, #222); }
  .trio .k { background: #000; }
  .no, .trio .no { background: linear-gradient(to bottom right, #fff 43%, #f00 43% 57%, #fff 57%); }
  .mode { margin-bottom: 27px; }

  .doc { flex: 1; min-width: 0; display: flex; flex-direction: column; border-left: 2px solid #383838; border-right: 2px solid #383838; }
  .doctabs { height: 58px; flex: none; background: #424242; border-bottom: 2px solid #383838; display: flex; }
  .doctab { display: flex; align-items: center; background: #535353; border-right: 2px solid #383838; padding: 4px 13px 0 19px; width: 568px; font-weight: 700; font-size: 21px; justify-content: space-between; white-space: nowrap; }
  .view { flex: 1; min-height: 0; display: flex; }
  .canvas { flex: 1; background: #5e5e5e; padding: 52px 0 0 629px; display: flex; }
  .artboard { flex: 1; background: #fff; border: solid #000; border-width: 3px 0 0 3px; }
  .vscroll { width: 32px; background: #4a4a4a; display: flex; flex-direction: column; align-items: center; justify-content: space-between; padding: 12px 0; }
  .vscroll .chev, .hscroll .chev { stroke: #a0a0a0; }
  .vscroll .thumb { width: 30px; height: 50px; border-radius: 15px; background: #606060; }
  .status { height: 32px; flex: none; display: flex; align-items: stretch; padding-left: 8px; }
  .sf { display: flex; background: #434343; border: 2px solid #5e5e5e; border-bottom: 0; border-radius: 5px 5px 0 0; }
  .sf input { width: 100%; padding: 5px 0 0 3px; }
  .sf button { width: 36px; border-left: 2px solid #5c5c5c; background: #4a4a4a; padding-top: 4px; }
  .sf.z { width: 137px; }
  .sf.a { width: 118px; }
  .nav { width: 82px; display: flex; align-items: center; justify-content: center; gap: 20px; fill: #6e6e6e; padding-top: 4px; }
  .cur { width: 401px; border: solid #4a4a4a; border-width: 0 2px; text-align: center; padding-top: 6px; color: #c8c8c8; line-height: 26px; }
  .play { width: 34px; padding-top: 4px; }
  .hscroll { flex: 1; display: flex; align-items: center; justify-content: space-between; background: #4a4a4a; padding: 2px 8px 0; }
  .hscroll .thumb { width: 50px; height: 30px; margin-right: 30px; border-radius: 15px; background: #606060; }
  .corner { width: 32px; }

  .panels { width: 484px; flex: none; display: flex; flex-direction: column; gap: 2px; border-left: 2px solid #383838; margin-left: 2px; }
  .panels .strip { margin-bottom: -4px; }
  .panel { border: solid #383838; border-width: 2px 2px 2px 0; flex: none; display: flex; flex-direction: column; }
  .tabs { height: 54px; flex: none; display: flex; background: #424242; border-bottom: 2px solid #383838; }
  .tab { height: 54px; overflow: hidden; border-right: 2px solid #383838; padding: 3px 0 2px 18px; justify-content: flex-start; font-weight: 700; font-size: 19px; color: #a0a0a0; }
  .tab.on { background: #535353; color: #fff; }
  .updown { width: 10px; height: 16px; margin: 0 11px 0 -8px; fill: none; stroke: #b0b0b0; stroke-width: 2; }
  .burger { margin: 0 12px 0 auto; flex-direction: column; gap: 2px; padding-bottom: 2px; }
  .burger i { width: 20px; height: 2px; background: #b0b0b0; }
  .body { flex: 1; padding: 12px 10px 0; display: flex; flex-direction: column; }
  .farbe { height: 378px; }
  .farbe .trio { align-self: flex-start; margin: 6px 0 20px; }
  .farbe .trio i { width: 24px; height: 24px; }
  .spectrum { height: 242px; width: 434px; margin-left: 2px; border: 2px solid #2e2e2e; background:
    linear-gradient(transparent 60%, #0009 80%, #000 97%),
    radial-gradient(ellipse 13% 42% at 35% 60%, #009b3a 50%, transparent),
    radial-gradient(ellipse 9% 40% at 67% 62%, #234a9c 30%, transparent),
    linear-gradient(#fff 0, #fffc 12%, #fff6 32%, transparent 55%),
    linear-gradient(90deg, #e30613 0, #f39200 10%, #ffed00 16%, #8fbf22 24%, #009b3a 30% 40%, #009f9a 48%, #00a8ea 56%, #0d5fb0 61%, #234a9c 67%, #5a3f92 76%, #c0479a 84%, #e6288a 91%, #e30613 100%); }
  .felder { height: 378px; }
  .fhead { display: flex; justify-content: space-between; }
  .toggle { display: flex; height: 48px; border: 2px solid #606060; border-radius: 5px; overflow: hidden; }
  .toggle button { width: 47px; }
  .toggle .on { background: #2e2e2e; }
  .swbox { margin-top: 10px; height: 200px; border: 2px solid #606060; display: flex; flex-direction: column; gap: 2px; flex: none; }
  .swrow { display: flex; gap: 2px; height: 26px; flex: none; }
  .swrow > * { width: 26px; height: 26px; }
  .fold { margin: 4px 0 0; }
  .sel { background: #fff; outline: 2px solid #000; outline-offset: -4px; }
  .g1 { background: linear-gradient(90deg, #fff, #111); }
  .g2 { background: linear-gradient(90deg, #ffec00, #f7a823 60%, #e6332a); }
  .g3 { background: linear-gradient(90deg, #2b83c5, #e6eef5); }
  .foot { display: flex; align-items: center; height: 38px; gap: 22px; justify-content: flex-end; padding-right: 42px; }
  .ib { width: 30px; height: 26px; }
  .ib svg { width: 30px; height: 26px; }
  .ib.off { opacity: 0.25; }
  .l3, .l3 svg { width: 36px; }
  .l2 { margin-right: -4px; }
  .l4, .l4 svg { width: 32px; }
  .l3 { margin-right: 8px; }
  .felder .foot { padding-left: 12px; gap: 0; justify-content: space-between; }
  .kontur { height: 122px; }
  .kontur .body { flex-direction: row; align-items: flex-start; padding-top: 12px; gap: 8px; }
  .kontur .dim { padding-top: 10px; width: 63px; }
  .stk { width: 176px; }
  .aussehen { height: 378px; }
  .list { border: 2px solid #606060; border-radius: 5px; height: 270px; flex: none; overflow: hidden; }
  .arow { height: 50px; display: flex; align-items: center; border-bottom: 2px solid #606060; color: #ececec; }
  .arow b { font-size: 20px; }
  .thumbn { width: 40px; height: 40px; margin: 0 56px 0 4px; border: 2px solid #2b2b2b; background: #fff; padding: 3px; box-shadow: inset 0 0 0 3px #fff, inset 0 0 0 5px #ccc; }
  .ec { width: 50px; height: 46px; display: flex; align-items: center; padding-left: 10px; border-right: 2px solid #383838; }
  .eye { width: 26px; height: 18px; fill: #c4c4c4; }
  .eye .iris { fill: #535353; }
  .eye.off { opacity: 0.25; }
  .cc { width: 50px; padding-left: 10px; }
  .an { width: 154px; }
  .asw { width: 36px; height: 36px; background: #fff; border: 2px solid #2b2b2b; padding: 2px; margin-right: 29px; }
  .asw i { height: 28px; border: 2px solid #2b2b2b; }
  .asw.dark i { background: #000; box-shadow: inset 0 0 0 2px #fff; }
  .aussehen .foot { padding-left: 9px; }
  .aussehen .foot .a4 { margin-left: auto; }
  .fx { font-size: 26px; color: #c4c4c4; }
  .ebenen { height: 376px; }
  .ebenen .list { height: 268px; }
  .layer { height: 40px; display: flex; align-items: center; background: linear-gradient(225deg, #d0d0d0 9px, #50657b 9px); }
  .layer .iris { fill: #50657b; }
  .le { width: 42px; height: 40px; display: flex; align-items: center; padding-left: 7px; border-right: 2px solid #606060; }
  .ll { width: 42px; height: 40px; border-right: 2px solid #606060; }
  .bar { width: 6px; height: 36px; margin-left: 2px; background: #4f80ff; }
  .lt { width: 36px; height: 36px; margin: 0 10px 0 52px; background: #fff; border: 2px solid #000; }
  .ln { flex: 1; }
  .lo { width: 74px; height: 40px; border-left: 2px solid #606060; padding: 12px 0 0 13px; }
  .lo i { width: 16px; height: 16px; border: 2px solid #c4c4c4; border-radius: 50%; }
  .count { margin-right: auto; color: #d0d0d0; }
  .path { flex: 1; min-height: 0; }
  .path .body { padding-top: 14px; }
  .prow { display: flex; align-items: center; padding-left: 12px; }
  .modes { height: 70px; gap: 44px; }
  .conv { width: 154px; height: 38px; border-radius: 4px; background: #585858; color: #777; margin-left: -12px; }
  .finders { padding: 21px 0 0 18px; gap: 46px; }

  .dock { width: 194px; flex: none; border: solid #383838; border-width: 0 2px; margin-left: 2px; }
  .dockbody { border-bottom: 2px solid #383838; height: 138px; display: flex; flex-direction: column; }
  .dockbody .grip { margin: 6px 0 6px 76px; }
  .dockbody button { justify-content: flex-start; gap: 15px; padding-left: 17px; height: 56px; font-weight: 700; font-size: 19px; }

  .taskbar { height: 24px; flex: none; background: #000; display: flex; overflow: hidden; padding-left: 120px; }
  .find { width: 860px; background: #f2f2f2; border-top: 1px solid #bbb; padding-left: 34px; }
  .pins { width: 872px; padding: 22px 52px 0 553px; display: flex; justify-content: space-between; }
  .pins i { width: 16px; height: 2px; }
  .p1 { background: #888; }
  .p2 { background: #a34848; }
  .p3 { background: #555; }
  .active { width: 121px; background: #333; padding: 20px 32px 0; }
  .active i { height: 4px; background: #e07b1f; }
  time { margin: 0 10px 0 auto; width: 247px; padding: 12px 0 0 2px; border-right: 2px solid #555; font-size: 26px; line-height: 26px; color: #fff; height: 24px; }
</style>
